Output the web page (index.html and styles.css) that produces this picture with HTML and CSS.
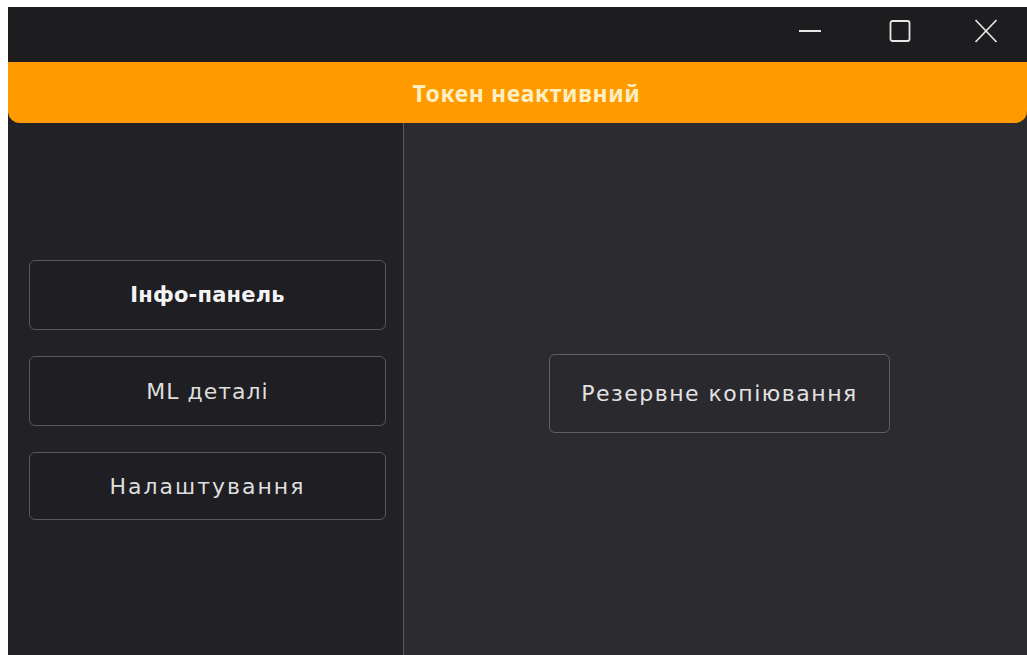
FILE: index.html
```html
<!DOCTYPE html>
<html lang="uk">
<head>
<meta charset="utf-8">
<title>Токен неактивний</title>
<link rel="stylesheet" href="styles.css">
</head>
<body>
<div class="window">
  <header class="titlebar">
    <div class="controls">
      <button class="ctl" aria-label="Згорнути">
        <svg width="24" height="24" viewBox="0 0 24 24"><path d="M1 12h22" stroke="#e6e6e6" stroke-width="2"/></svg>
      </button>
      <button class="ctl" aria-label="Розгорнути">
        <svg width="24" height="24" viewBox="0 0 24 24"><rect x="2.5" y="2" width="19" height="20" rx="2" fill="none" stroke="#e6e6e6" stroke-width="1.8"/></svg>
      </button>
      <button class="ctl close" aria-label="Закрити">
        <svg width="24" height="24" viewBox="0 0 24 24"><path d="M1.5 1l21 22M22.5 1l-21 22" stroke="#e6e6e6" stroke-width="1.7"/></svg>
      </button>
    </div>
  </header>
  <div class="banner">Токен неактивний</div>
  <div class="body">
    <nav class="sidebar">
      <button class="nav-btn active">Інфо-панель</button>
      <button class="nav-btn">ML деталі</button>
      <button class="nav-btn small">Налаштування</button>
    </nav>
    <main class="content">
      <button class="action-btn">Резервне копіювання</button>
    </main>
  </div>
</div>
</body>
</html>
```
FILE: styles.css
```css
html, body {
  margin: 0;
  height: 100%;
  background: #ffffff;
  overflow: hidden;
}

body {
  padding: 7px 0 0 8px;
  box-sizing: border-box;
  font-family: "DejaVu Sans", "Noto Sans", sans-serif;
}

.window {
  height: 648px;
  display: flex;
  flex-direction: column;
  background: #2c2b30;
}

.titlebar {
  height: 55px;
  background: #1d1d1f;
  display: flex;
  justify-content: flex-end;
  align-items: flex-start;
}

.controls {
  display: flex;
  padding-top: 12px;
}

.ctl {
  width: 90px;
  height: 24px;
  border: 0;
  background: transparent;
  padding: 0;
  display: flex;
  align-items: center;
  justify-content: center;
}

.ctl.close {
  width: 82px;
}

/* status banner sits above the panels so its rounded corners overlap them */
.banner {
  position: relative;
  z-index: 1;
  height: 61px;
  padding-left: 18px;
  background: #ff9b00;
  border-radius: 0 0 12px 12px;
  color: #fff0c4;
  font-family: "Noto Sans", sans-serif;
  font-weight: 700;
  font-size: 23px;
  letter-spacing: 0.6px;
  display: flex;
  align-items: center;
  justify-content: center;
}

.body {
  flex: 1;
  display: flex;
  margin-top: -12px;
}

.sidebar {
  width: 396px;
  background: #222226;
  border-right: 1px solid #5a5a5e;
  display: flex;
  flex-direction: column;
  gap: 26px;
  padding: 149px 17px 0 21px;
  box-sizing: border-box;
}

.nav-btn {
  height: 70px;
  background: #1f1e22;
  border: 1px solid #58585c;
  border-radius: 6px;
  color: #dedede;
  font-family: inherit;
  font-size: 22px;
  letter-spacing: 1px;
}

.nav-btn.active {
  font-size: 21px;
  font-weight: 700;
  letter-spacing: 0.2px;
  color: #f4f4f4;
}

.nav-btn.small {
  height: 68px;
  letter-spacing: 2px;
}

.content {
  flex: 1;
  display: flex;
  align-items: center;
  padding-left: 145px;
  padding-top: 28px;
  padding-bottom: 8px;
}

.action-btn {
  width: 341px;
  height: 79px;
  background: #2a292e;
  border: 1px solid #606064;
  border-radius: 6px;
  color: #e2e2e2;
  font-family: inherit;
  font-size: 22px;
  letter-spacing: 1.5px;
}
```
